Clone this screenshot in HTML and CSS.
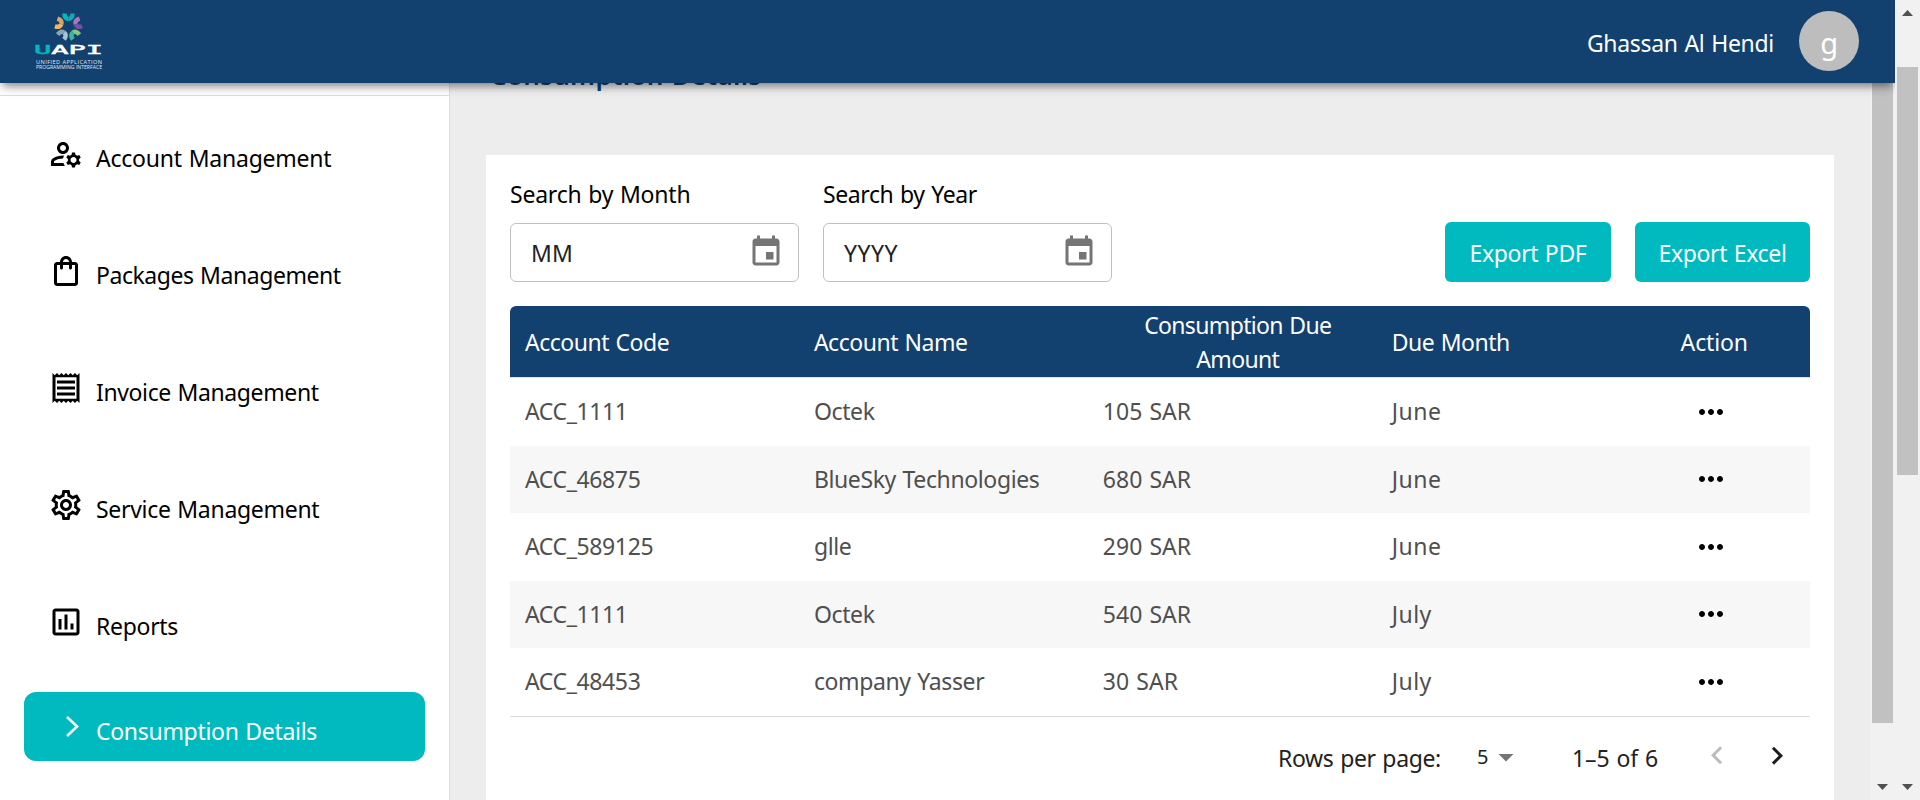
FILE: index.html
```html
<!DOCTYPE html>
<html lang="en">
<head>
<meta charset="utf-8">
<title>UAPI - Consumption Details</title>
<link rel="stylesheet" href="styles.css">
</head>
<body>
<svg width="0" height="0" class="defs">
  <symbol id="i-dots" viewBox="0 0 24 24"><path d="M6 10c-1.100 0-2 .9-2 2s.9 2 2 2 2-.9 2-2-.9-2-2-2zm12 0c-1.100 0-2 .9-2 2s.9 2 2 2 2-.9 2-2-.9-2-2-2zm-6 0c-1.100 0-2 .9-2 2s.9 2 2 2 2-.9 2-2-.9-2-2-2z"/></symbol>
  <symbol id="i-event" viewBox="0 0 24 24"><path d="M17 12h-5v5h5v-5zM16 1v2H8V1H6v2H5c-1.110 0-1.990.9-1.990 2L3 19c0 1.100.89 2 2 2h14c1.100 0 2-.9 2-2V5c0-1.100-.9-2-2-2h-1V1h-2zm3 18H5V8h14v11z"/></symbol>
</svg>
<div class="app">
  <header class="topbar">
    <svg class="logo" width="68" height="62" viewBox="0 0 68 62">
      <g transform="translate(33.500 18.500)" fill="none" stroke-width="4.400" stroke-linecap="butt">
        <g><path d="M-4-13C-4-9-2.500-7.500 0-7.500" stroke="#00babf"/><path d="M4-13C4-9 2.500-7.500 0-7.500" stroke="#19a7a9"/></g>
        <g transform="rotate(72)"><path d="M-4-13C-4-9-2.500-7.500 0-7.500" stroke="#a678bd"/><path d="M4-13C4-9 2.500-7.500 0-7.500" stroke="#7a50a2"/></g>
        <g transform="rotate(144)"><path d="M-4-13C-4-9-2.500-7.500 0-7.500" stroke="#84c77d"/><path d="M4-13C4-9 2.500-7.500 0-7.500" stroke="#3fb89a"/></g>
        <g transform="rotate(216)"><path d="M-4-13C-4-9-2.500-7.500 0-7.500" stroke="#a9c4d3"/><path d="M4-13C4-9 2.500-7.500 0-7.500" stroke="#8aa5b6"/></g>
        <g transform="rotate(288)"><path d="M-4-13C-4-9-2.500-7.500 0-7.500" stroke="#efb562"/><path d="M4-13C4-9 2.500-7.500 0-7.500" stroke="#d8a468"/></g>
      </g>
      <text class="logo-word" x="-1" y="45.500" textLength="69" lengthAdjust="spacingAndGlyphs"><tspan class="logo-u">U</tspan>API</text>
      <text class="logo-sub" x="1" y="55.700" textLength="66">UNIFIED APPLICATION</text>
      <text class="logo-sub" x="1" y="61.200" textLength="66" lengthAdjust="spacingAndGlyphs">PROGRAMMING INTERFACE</text>
    </svg>
    <div class="user"><span class="user-name">Ghassan Al Hendi</span><span class="avatar">g</span></div>
  </header>
  <div class="main">
    <nav class="sidebar">
      <div class="sidebar-top"></div>
      <ul class="menu">
        <li class="item"><svg class="icon" viewBox="0 0 24 24"><path d="M4 18v-.65c0-.34.16-.66.41-.81C6.100 15.530 8.030 15 10 15c.03 0 .05 0 .08.010.1-.7.3-1.370.59-1.980-.22-.020-.44-.030-.67-.030-2.420 0-4.680.67-6.610 1.820-.88.52-1.390 1.500-1.390 2.530V20h9.260c-.42-.6-.75-1.280-.97-2H4zM10 12c2.210 0 4-1.790 4-4s-1.790-4-4-4-4 1.790-4 4 1.790 4 4 4zm0-6c1.100 0 2 .9 2 2s-.9 2-2 2-2-.9-2-2 .9-2 2-2zM20.750 16c0-.22-.03-.42-.06-.63l1.140-1.010-1-1.730-1.450.49c-.32-.27-.68-.48-1.080-.63L18 11h-2l-.3 1.490c-.4.15-.76.36-1.080.63l-1.450-.49-1 1.730 1.140 1.010c-.03.21-.06.41-.06.63s.03.42.06.63l-1.140 1.010 1 1.730 1.450-.49c.32.27.68.48 1.080.63L16 21h2l.3-1.490c.4-.15.76-.36 1.080-.63l1.450.49 1-1.730-1.140-1.010c.03-.21.06-.41.06-.63zM17 18c-1.100 0-2-.9-2-2s.9-2 2-2 2 .9 2 2-.9 2-2 2z"/></svg><span class="t-account">Account Management</span></li>
        <li class="item"><svg class="icon" viewBox="0 0 24 24"><path d="M18 6h-2c0-2.210-1.790-4-4-4S8 3.790 8 6H6c-1.100 0-2 .9-2 2v12c0 1.100.9 2 2 2h12c1.100 0 2-.9 2-2V8c0-1.100-.9-2-2-2zm-6-2c1.100 0 2 .9 2 2h-4c0-1.100.9-2 2-2zm6 16H6V8h2v2c0 .55.45 1 1 1s1-.45 1-1V8h4v2c0 .55.45 1 1 1s1-.45 1-1V8h2v12z"/></svg><span class="t-packages">Packages Management</span></li>
        <li class="item"><svg class="icon" viewBox="0 0 24 24"><path d="M19.500 3.500L18 2l-1.500 1.500L15 2l-1.500 1.500L12 2l-1.500 1.500L9 2 7.500 3.500 6 2 4.500 3.500 3 2v20l1.500-1.500L6 22l1.500-1.500L9 22l1.500-1.500L12 22l1.500-1.500L15 22l1.500-1.500L18 22l1.500-1.500L21 22V2l-1.500 1.500zM19 19.090H5V4.910h14v14.180zM6 15h12v2H6zm0-4h12v2H6zm0-4h12v2H6z"/></svg><span class="t-invoice">Invoice Management</span></li>
        <li class="item"><svg class="icon" viewBox="0 0 24 24"><path d="M19.430 12.980c.04-.32.07-.64.07-.98 0-.34-.03-.66-.07-.98l2.110-1.650c.19-.15.24-.42.12-.64l-2-3.460c-.09-.16-.26-.25-.44-.25-.06 0-.12.010-.17.030l-2.490 1c-.52-.4-1.080-.73-1.690-.98l-.38-2.650C14.460 2.180 14.250 2 14 2h-4c-.25 0-.46.18-.49.42l-.38 2.650c-.61.25-1.170.59-1.690.98l-2.490-1c-.06-.020-.12-.030-.18-.030-.17 0-.34.09-.43.25l-2 3.460c-.13.22-.07.49.12.64l2.110 1.650c-.04.32-.07.65-.07.98 0 .33.03.66.07.98l-2.110 1.650c-.19.15-.24.42-.12.64l2 3.460c.09.16.26.25.44.25.06 0 .12-.010.17-.030l2.490-1c.52.4 1.080.73 1.690.98l.38 2.650c.03.24.24.42.49.42h4c.25 0 .46-.18.49-.42l.38-2.650c.61-.25 1.170-.59 1.690-.98l2.490 1c.06.020.12.030.18.030.17 0 .34-.09.43-.25l2-3.460c.12-.22.07-.49-.12-.64l-2.110-1.650zm-1.980-1.710c.04.31.05.52.05.73 0 .21-.020.43-.05.73l-.14 1.130.89.7 1.080.84-.7 1.210-1.270-.51-1.040-.42-.9.68c-.43.32-.84.56-1.250.73l-1.060.43-.16 1.130-.2 1.350h-1.400l-.19-1.350-.16-1.130-1.060-.43c-.43-.18-.83-.41-1.230-.71l-.91-.7-1.060.43-1.270.51-.7-1.210 1.080-.84.89-.7-.14-1.130c-.03-.31-.05-.54-.05-.74s.020-.43.05-.73l.14-1.130-.89-.7-1.080-.84.7-1.210 1.270.51 1.040.42.9-.68c.43-.32.84-.56 1.250-.73l1.060-.43.16-1.130.2-1.350h1.390l.19 1.350.16 1.130 1.060.43c.43.18.83.41 1.230.71l.91.7 1.060-.43 1.270-.51.7 1.210-1.070.85-.89.7.14 1.130zM12 8c-2.210 0-4 1.790-4 4s1.790 4 4 4 4-1.790 4-4-1.790-4-4-4zm0 6c-1.100 0-2-.9-2-2s.9-2 2-2 2 .9 2 2-.9 2-2 2z"/></svg><span>Service Management</span></li>
        <li class="item"><svg class="icon" viewBox="0 0 24 24"><path d="M19 3H5c-1.100 0-2 .9-2 2v14c0 1.100.9 2 2 2h14c1.100 0 2-.9 2-2V5c0-1.100-.9-2-2-2zm0 16H5V5h14v14zM7 10h2v7H7zm4-3h2v10h-2zm4 6h2v4h-2z"/></svg><span>Reports</span></li>
        <li class="item item-active"><svg class="icon" viewBox="0 0 36 36"><path class="chev" d="M19 8l10 9.500L19 27"/></svg><span>Consumption Details</span></li>
      </ul>
    </nav>
    <main class="content">
      <h1 class="title">Consumption Details</h1>
      <section class="card">
        <div class="filters">
          <label class="field"><span class="label">Search by Month</span>
            <span class="input"><span class="mm">MM</span><svg class="icon"><use href="#i-event"/></svg></span></label>
          <label class="field"><span class="label label-year">Search by Year</span>
            <span class="input"><span class="yyyy">YYYY</span><svg class="icon"><use href="#i-event"/></svg></span></label>
          <div class="actions"><button class="btn btn-pdf">Export PDF</button><button class="btn btn-excel">Export Excel</button></div>
        </div>
        <table class="table">
          <thead><tr><th>Account Code</th><th>Account Name</th><th class="wrap">Consumption Due Amount</th><th>Due Month</th><th class="act">Action</th></tr></thead>
          <tbody>
            <tr><td>ACC_1111</td><td>Octek</td><td class="num">105 SAR</td><td class="month">June</td><td class="dots"><svg class="icon"><use href="#i-dots"/></svg></td></tr>
            <tr><td>ACC_46875</td><td>BlueSky Technologies</td><td class="num">680 SAR</td><td class="month">June</td><td class="dots"><svg class="icon"><use href="#i-dots"/></svg></td></tr>
            <tr><td>ACC_589125</td><td>glle</td><td class="num">290 SAR</td><td class="month">June</td><td class="dots"><svg class="icon"><use href="#i-dots"/></svg></td></tr>
            <tr><td>ACC_1111</td><td>Octek</td><td class="num">540 SAR</td><td class="month">July</td><td class="dots"><svg class="icon"><use href="#i-dots"/></svg></td></tr>
            <tr><td>ACC_48453</td><td>company Yasser</td><td class="num">30 SAR</td><td class="month">July</td><td class="dots"><svg class="icon"><use href="#i-dots"/></svg></td></tr>
          </tbody>
        </table>
        <div class="pager">
          <span class="rpp">Rows per page:</span>
          <span class="size">5</span>
          <svg class="icon caret" viewBox="0 0 24 24"><path d="M7 10l5 5 5-5z"/></svg>
          <span class="range">1–5 of 6</span>
          <svg class="icon prev" viewBox="0 0 24 24"><path d="M15.410 16.090l-4.580-4.590 4.580-4.590L14 5.500l-6 6 6 6z"/></svg>
          <svg class="icon next" viewBox="0 0 24 24"><path d="M8.590 16.340l4.580-4.590-4.580-4.590L10 5.750l6 6-6 6z"/></svg>
        </div>
      </section>
    </main>
    <div class="scroll scroll-inner"><div class="thumb"></div><svg class="arrow" viewBox="0 0 11 6"><path d="M0 0h11L5.500 6z"/></svg></div>
  </div>
</div>
<div class="scroll scroll-page"><svg class="arrow" viewBox="0 0 11 6"><path d="M0 6h11L5.500 0z"/></svg><div class="thumb"></div><svg class="arrow arrow-down" viewBox="0 0 11 6"><path d="M0 0h11L5.500 6z"/></svg></div>
</body>
</html>
```
FILE: styles.css
```css
* { box-sizing: border-box; }
body {
  margin: 0;
  width: 1920px;
  height: 800px;
  overflow: hidden;
  display: flex;
  font: 23px/34px "Noto Sans", "Open Sans", sans-serif;
  letter-spacing: -0.300px;
  word-spacing: 1px;
  color: #000;
  background: #fff;
}
.defs { position: absolute; }
.app { width: 1895px; height: 800px; display: flex; flex-direction: column; overflow: hidden; }

/* top bar */
.topbar {
  flex: none;
  height: 83px;
  position: relative;
  z-index: 2;
  display: flex;
  justify-content: space-between;
  align-items: flex-start;
  padding: 8px 36px 0 35px;
  background: #12406f;
  color: #fff;
  box-shadow: 0 6px 8px -3px rgba(0, 0, 0, .42), 0 2px 14px rgba(0, 0, 0, .12);
}
.logo { overflow: visible; word-spacing: 0; }
.logo-word { font: 12px "DejaVu Sans Mono", monospace; letter-spacing: 0; fill: #fff; stroke: #fff; stroke-width: 0.500px; }
.logo-u { fill: #00babf; stroke: #00babf; }
.logo-sub { font: 5.600px "Open Sans", sans-serif; letter-spacing: 0; fill: #e3eaf0; }
.user { display: flex; gap: 25px; align-items: flex-start; padding-top: 3px; }
.user-name { padding-top: 15px; letter-spacing: -0.300px; }
.avatar {
  width: 60px;
  height: 60px;
  border-radius: 50%;
  background: #bdbdbd;
  text-align: center;
  font-size: 29px;
  line-height: 63px;
}

/* sidebar */
.main { flex: 1; min-height: 0; display: flex; background: #ededed; }
.sidebar { width: 450px; flex: none; background: #fff; border-right: 1px solid #dedede; }
.sidebar-top { height: 13px; border-bottom: 1px solid #dcdcdc; }
.menu { list-style: none; margin: 0; padding: 23px 24px 0; display: flex; flex-direction: column; gap: 48px; }
.item { height: 69px; display: flex; align-items: center; gap: 12px; padding-left: 24px; }
.item span { padding-top: 8px; }
.item .t-account { letter-spacing: -0.220px; }
.item .t-packages { letter-spacing: -0.450px; }
.item .t-invoice { letter-spacing: -0.380px; }
.item-active { margin-top: -12px; width: 401px; border-radius: 12px; background: #00babf; color: #fff; }
.icon { width: 36px; height: 36px; flex: none; display: block; }
.chev { fill: none; stroke: #fff; stroke-width: 2.600; }

/* content */
.content { width: 1420px; flex: none; padding: 0 36px; overflow: visible; }
.title {
  margin: -26px 0 62px 4px;
  height: 36px;
  font-size: 26px;
  line-height: 36px;
  font-weight: 600;
  letter-spacing: 0.300px;
  color: #12406f;
}
.card { width: 1348px; min-height: 645px; padding: 22px 24px; background: #fff; }
.filters { display: flex; gap: 24px; align-items: flex-end; }
.field { width: 289px; }
.label { display: block; height: 46px; letter-spacing: -0.220px; }
.label-year { letter-spacing: -0.400px; }
.input {
  display: flex;
  justify-content: space-between;
  height: 59px;
  border: 1px solid #c0c0c0;
  border-radius: 6px;
  padding: 10px 14px 0 20px;
  color: #222;
}
.input span { padding-top: 2px; }
.input .icon { fill: #757575; }
.mm { letter-spacing: 0.200px; }
.yyyy { letter-spacing: 0.500px; }
.actions { margin-left: auto; display: flex; gap: 24px; }
.btn {
  height: 60px;
  border: 0;
  border-radius: 6px;
  padding: 2px 0 0;
  background: #00babf;
  color: #fff;
  font: inherit;
  letter-spacing: -0.350px;
  word-spacing: 1px;
}
.btn-pdf { width: 166px; }
.btn-excel { width: 175px; }

/* table */
.table { width: 1300px; margin-top: 24px; table-layout: fixed; border-collapse: separate; border-spacing: 0; border-bottom: 1px solid #dcdcdc; }
.table th {
  width: 288.900px;
  height: 72px;
  padding: 1px 15px 0;
  background: #12406f;
  border-bottom: 1px solid #dce3ea;
  color: #fff;
  font-weight: 400;
  text-align: left;
  letter-spacing: -0.480px;
}
.table th:first-child { border-top-left-radius: 6px; }
.table th:last-child { border-top-right-radius: 6px; }
.table th.wrap { text-align: center; padding: 1px 9px 0 20px; letter-spacing: -0.650px; }
.table th.act { width: 144.400px; letter-spacing: -0.120px; }
.table td { height: 67.500px; padding: 0 15px 1px; color: #4f4f4f; letter-spacing: -0.380px; }
.table tbody tr:nth-child(even) td { background: #f7f7f7; }
.table td.num { letter-spacing: 0.050px; }
.table td.month { letter-spacing: 0.500px; }
.table td.dots { padding: 0 0 0 27px; }

/* pagination */
.pager { display: flex; align-items: center; padding: 24px 27px 0 0; justify-content: flex-end; color: #222; letter-spacing: -0.350px; }
.size { font-size: 20px; margin-left: 36px; margin-top: -2px; }
.caret { fill: #757575; margin-top: -2px; }
.range { margin-left: 48px; letter-spacing: -0.100px; }
.prev { margin-left: 41px; fill: #bbb; margin-top: -3px; }
.next { margin-left: 24px; margin-right: -12px; fill: #1c1c1c; margin-top: -3px; }

/* scrollbars */
.scroll { width: 25px; flex: none; background: #f1f1f1; display: flex; flex-direction: column; align-items: center; }
.thumb { width: 21px; background: #c1c1c1; }
.arrow { width: 11px; height: 6px; fill: #505050; flex: none; }
.scroll-inner .thumb { height: 640px; }
.scroll-inner .arrow { margin-top: 61px; }
.scroll-page .arrow { margin-top: 10px; }
.scroll-page .thumb { height: 408px; margin-top: 51px; }
.scroll-page .arrow-down { margin-top: 309px; }
```
